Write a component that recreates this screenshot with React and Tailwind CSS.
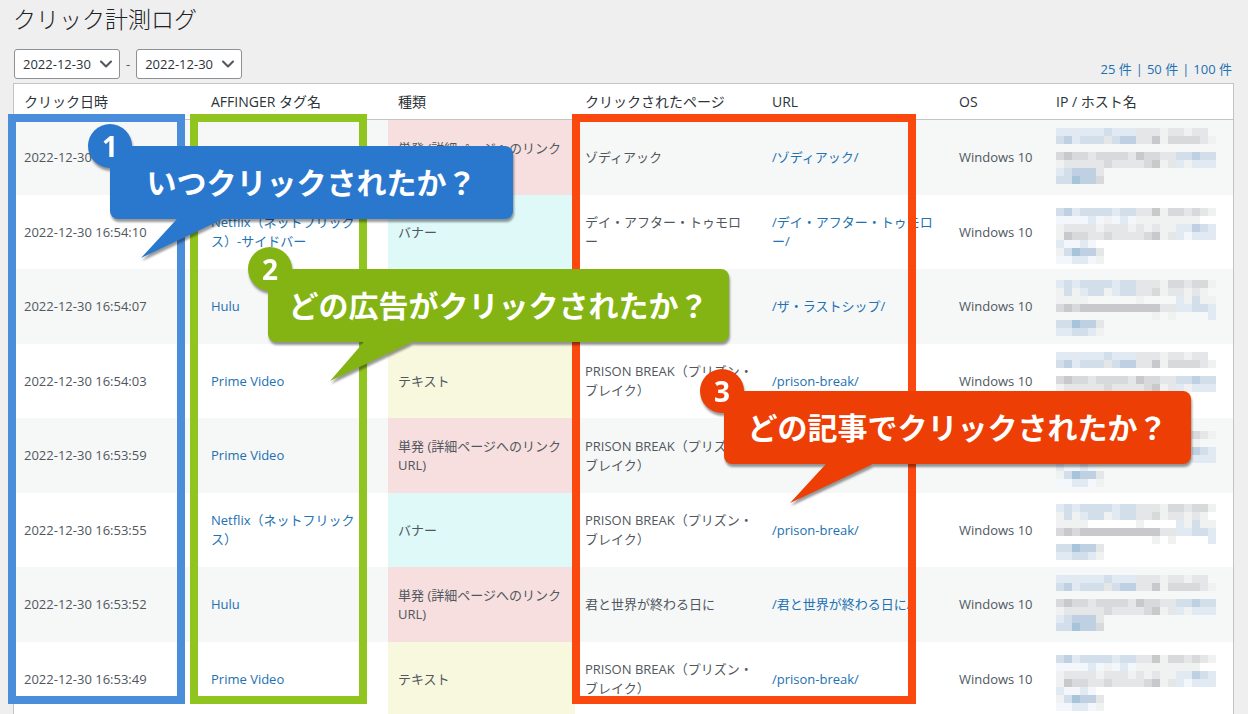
import React from 'react';
import { ChevronDown } from 'lucide-react';

const TYPES = {
  single: { label: '単発 (詳細ページへのリンク URL)', bg: 'bg-[#f7dfdf]' },
  banner: { label: 'バナー', bg: 'bg-[#dff9f9]' },
  text: { label: 'テキスト', bg: 'bg-[#f8f8df]' }
};

const PRISON = 'PRISON BREAK（プリズン・\nブレイク）';

const logs = [
  { date: '2022-12-30', type: 'single', page: 'ゾディアック', url: '/ゾディアック/', os: 'Windows 10', mask: 'a' },
  { date: '2022-12-30 16:54:10', tag: 'Netflix（ネットフリック\nス）-サイドバー', type: 'banner', page: 'デイ・アフター・トゥモロ\nー', url: '/デイ・アフター・トゥモロ\nー/', os: 'Windows 10', mask: 'b' },
  { date: '2022-12-30 16:54:07', tag: 'Hulu', url: '/ザ・ラストシップ/', os: 'Windows 10', mask: 'c' },
  { date: '2022-12-30 16:54:03', tag: 'Prime Video', type: 'text', page: PRISON, url: '/prison-break/', os: 'Windows 10', mask: 'a' },
  { date: '2022-12-30 16:53:59', tag: 'Prime Video', type: 'single', page: PRISON, mask: 'b' },
  { date: '2022-12-30 16:53:55', tag: 'Netflix（ネットフリック\nス）', type: 'banner', page: PRISON, url: '/prison-break/', os: 'Windows 10', mask: 'c' },
  { date: '2022-12-30 16:53:52', tag: 'Hulu', type: 'single', page: '君と世界が終わる日に', url: '/君と世界が終わる日に/', os: 'Windows 10', mask: 'a' },
  { date: '2022-12-30 16:53:49', tag: 'Prime Video', type: 'text', page: PRISON, url: '/prison-break/', os: 'Windows 10', mask: 'b' }
];

const columns = ['クリック日時', 'AFFINGER タグ名', '種類', 'クリックされたページ', 'URL', 'OS', 'IP / ホスト名'];

// Masked IP / host: one character per 8px block
const SHADES = {
  f: '#f0f1f1',
  v: '#f3f7fb',
  g: '#e5e6e7',
  G: '#d8d9da',
  D: '#c9c9cc',
  b: '#e1e9f2',
  B: '#d2deea',
  C: '#bfd0e2',
  T: '#a6c5da'
};

const MASKS = {
  a: {
    top: 8,
    rows: [
      'bbbbbbBbbbgggfggfgg.',
      'BCbBBBgBCCggDfGGGGgf',
      '',
      'GDGGgGGGGgDGGggBBCBB',
      'fgggggGggggGDfgbfbbb',
      'bBCCCg',
      'BBTCCG'
    ]
  },
  b: {
    top: 13,
    rows: [
      'BCbBBBBbBBggDfGGgGgf',
      'vvvvbvfvbvffffffff..',
      'fggggfgggfgfgffbbCBb',
      'fDGGggGggggGDfgbvbbb',
      'bvvbv',
      'fBTCCg',
      'vvbbvf'
    ]
  },
  c: {
    top: 11,
    rows: [
      'bBbBBBBbBBgggfGGgGGf',
      'fBfbBBfbBBggGfggfgf.',
      'ffff......f....bfBff',
      'GDGDDDDDDDDDDggbbBBb',
      '............f.f....b',
      'BBTCCg',
      'bbBBbf'
    ]
  }
};

const MaskedHost = ({ kind }) => {
  const { top, rows } = MASKS[kind];
  return (
    <svg width="160" height="72" viewBox="0 0 160 72" shapeRendering="crispEdges" className="block" aria-hidden="true">
      {rows.map((row, y) =>
        row.split('').map((c, x) =>
          SHADES[c] ? (
            <rect key={`${x}-${y}`} x={x * 8} y={top + y * 8} width="8" height="8" fill={SHADES[c]} />
          ) : null
        )
      )}
    </svg>
  );
};

const DateSelect = ({ label }) => (
  <div className="relative">
    <select
      aria-label={label}
      className="block h-[30px] w-[106px] appearance-none rounded-[3px] border border-[#8c8f94] bg-white pl-2 text-[13px] text-[#2c3338]"
    >
      <option>2022-12-30</option>
    </select>
    <ChevronDown className="pointer-events-none absolute right-1 top-[5px] h-5 w-5 text-[#50575e]" strokeWidth={2.5} />
  </div>
);

const Callout = ({ number, text, className, badge, tail }) => (
  <div className={`absolute h-[73px] rounded-lg drop-shadow-[1px_3px_1px_rgba(0,0,0,0.4)] ${className}`}>
    <svg width="160" height="41" viewBox="0 0 160 41" className="absolute left-0 top-[72px] fill-current" aria-hidden="true">
      <polygon points={tail} />
    </svg>
    <div className={`absolute -top-[22px] flex h-11 w-11 items-center justify-center rounded-full bg-current ${badge}`}>
      <span className="text-[28px] font-bold leading-none text-white">{number}</span>
    </div>
    <p className="flex h-full items-center justify-center whitespace-nowrap text-3xl font-bold text-white">{text}</p>
  </div>
);

const App = () => {
  return (
    <div
      lang="ja"
      className="relative h-screen overflow-hidden bg-[#efefef] pl-[13px] pr-[14px] font-['Open_Sans','Noto_Sans_CJK_JP',sans-serif] text-[13px] leading-[19px] text-[#50575e]"
    >
      <h1 className="pt-1 text-[23px] leading-[30px] font-light text-[#1d2327]">クリック計測ログ</h1>

      {/* Filters */}
      <div className="mt-[15px] flex h-[34px] items-start justify-between pl-px">
        <div className="flex items-center gap-1.5">
          <DateSelect label="開始日" />
          <span>-</span>
          <DateSelect label="終了日" />
        </div>
        <nav className="flex gap-1 self-end pb-1 pr-0.5 text-[#2271b1]">
          <a href="#25">25 件</a>
          <span>|</span>
          <a href="#50">50 件</a>
          <span>|</span>
          <a href="#100">100 件</a>
        </nav>
      </div>

      {/* Click log */}
      <table className="w-full table-fixed border-separate border-spacing-0 border border-[#c3c4c7] bg-white">
        <colgroup>
          <col />
          <col />
          <col />
          <col />
          <col />
          <col className="w-[97px]" />
          <col />
        </colgroup>
        <thead>
          <tr className="h-9">
            {columns.map((name) => (
              <th key={name} scope="col" className="border-b border-[#c3c4c7] px-2.5 py-0 text-left text-sm font-normal text-[#2c3338]">
                {name}
              </th>
            ))}
          </tr>
        </thead>
        <tbody className="whitespace-pre-line">
          {logs.map((log) => (
            <tr key={log.date} className="h-[74px] odd:h-[75px] odd:bg-[#f6f7f7]">
              <td className="px-2.5 py-0">{log.date}</td>
              <td className="py-0 pl-2.5 pr-1">
                {log.tag && <a href="#tag" className="text-[#2271b1]">{log.tag}</a>}
              </td>
              <td className={`px-2.5 py-0 ${TYPES[log.type]?.bg || ''}`}>{TYPES[log.type]?.label}</td>
              <td className="py-0 pl-2.5 pr-1">{log.page}</td>
              <td className="py-0 pl-2.5 pr-1">
                {log.url && <a href="#page" className="text-[#2271b1]">{log.url}</a>}
              </td>
              <td className="px-2.5 py-0">{log.os}</td>
              <td className="px-2.5 py-0 align-top">
                <MaskedHost kind={log.mask} />
              </td>
            </tr>
          ))}
        </tbody>
      </table>

      {/* Highlighted columns */}
      <div className="absolute left-2 top-[114px] h-[590px] w-[177px] border-8 border-[#4a8edb]" />
      <div className="absolute left-[190px] top-[114px] h-[590px] w-[177px] border-8 border-[#90c51f]" />
      <div className="absolute left-[572px] top-[114px] h-[590px] w-[344px] border-8 border-[#fa480e]" />

      {/* Callouts */}
      <Callout
        number="1"
        text="いつクリックされたか？"
        tail="67,0 113,0 111,2 31,40 66,2"
        badge="-left-[22px]"
        className="left-[110px] top-[146px] w-[403px] bg-[#2a78ce] text-[#2a78ce]"
      />
      <Callout
        number="2"
        text="どの広告がクリックされたか？"
        tail="96,0 144,0 142,2 62,40 95,2"
        badge="-left-5"
        className="left-[268px] top-[269px] w-[461px] bg-[#83b414] text-[#83b414]"
      />
      <Callout
        number="3"
        text="どの記事でクリックされたか？"
        tail="102,0 149,0 147,2 66,40 101,2"
        badge="-left-6"
        className="left-[724px] top-[391px] w-[467px] bg-[#ec3e05] text-[#ec3e05]"
      />
    </div>
  );
};

export default App;
